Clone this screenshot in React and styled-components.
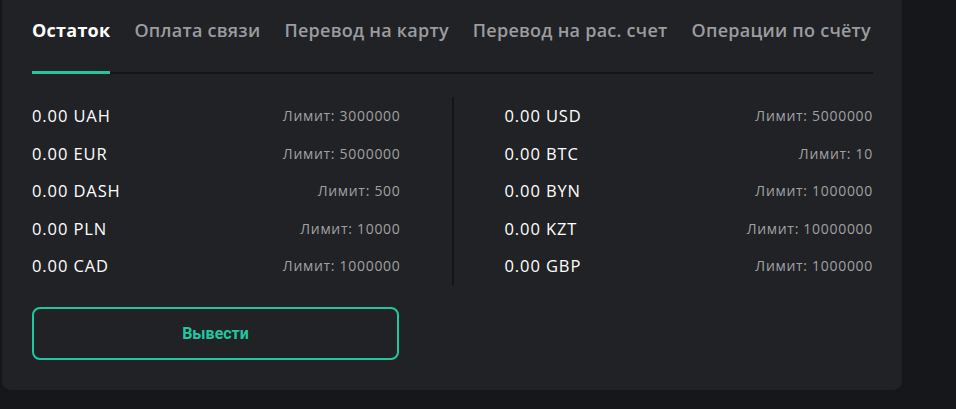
import React, { useState } from "react";
import styled, { createGlobalStyle } from "styled-components";

const GlobalStyle = createGlobalStyle`
  html, body {
    margin: 0;
    padding: 0;
    background: #16171a;
  }
  body {
    font-family: "Open Sans", "Noto Sans", sans-serif;
    color: #fff;
  }
`;

const Card = styled.div`
  width: 900px;
  margin-left: 2px;
  margin-top: -10px;
  padding: 10px 30px 30px 30px;
  box-sizing: border-box;
  background: #212225;
  border-radius: 0 0 9px 9px;
`;

const Tabs = styled.div`
  display: flex;
  gap: 24px;
  border-bottom: 2px solid #141518;
  height: 72px;
  margin-right: -1px;
`;

const Tab = styled.button`
  position: relative;
  display: flex;
  align-items: flex-start;
  background: none;
  border: none;
  padding: 18px 0 0;
  height: 72px;
  font-family: inherit;
  font-size: 18px;
  line-height: 24px;
  letter-spacing: 0.25px;
  font-weight: ${(p) => (p.$active ? 700 : 600)};
  color: ${(p) => (p.$active ? "#ffffff" : "#9b9ca0")};
  cursor: pointer;
  white-space: nowrap;

  &::after {
    content: "";
    display: ${(p) => (p.$active ? "block" : "none")};
    position: absolute;
    left: 0;
    right: 0;
    bottom: -2px;
    height: 3px;
    background: #1fc8a0;
  }
`;

const Balances = styled.div`
  display: flex;
  padding-top: 23px;
`;

const Column = styled.div`
  flex: 1;
  display: flex;
  flex-direction: column;
`;

const Divider = styled.div`
  width: 2px;
  background: #141518;
  margin: 0 51px 0 52px;
`;

const Row = styled.div`
  display: flex;
  justify-content: space-between;
  align-items: center;
  height: 37.5px;
`;

const Amount = styled.span`
  font-size: 16.5px;
  letter-spacing: 0.9px;
  color: #ffffff;
`;

const Limit = styled.span`
  font-size: 14px;
  letter-spacing: 0.7px;
  margin-right: -1px;
  color: #a0a1a4;
`;

const Withdraw = styled.button`
  margin-top: 22px;
  width: 367px;
  height: 53px;
  background: transparent;
  border: 2px solid #1fc8a0;
  border-radius: 8px;
  color: #1fc8a0;
  font-family: "Roboto", sans-serif;
  font-weight: 700;
  font-size: 16px;
  cursor: pointer;
`;

const tabs = [
  "Остаток",
  "Оплата связи",
  "Перевод на карту",
  "Перевод на рас. счет",
  "Операции по счёту",
];

const left = [
  ["UAH", "3000000"],
  ["EUR", "5000000"],
  ["DASH", "500"],
  ["PLN", "10000"],
  ["CAD", "1000000"],
];

const right = [
  ["USD", "5000000"],
  ["BTC", "10"],
  ["BYN", "1000000"],
  ["KZT", "10000000"],
  ["GBP", "1000000"],
];

const BalanceColumn = ({ items }) => (
  <Column>
    {items.map(([cur, limit]) => (
      <Row key={cur}>
        <Amount>0.00 {cur}</Amount>
        <Limit>Лимит: {limit}</Limit>
      </Row>
    ))}
  </Column>
);

const App = () => {
  const [active, setActive] = useState(0);
  return (
    <>
      <GlobalStyle />
      <Card>
        <Tabs>
          {tabs.map((t, i) => (
            <Tab key={t} $active={i === active} onClick={() => setActive(i)}>
              {t}
            </Tab>
          ))}
        </Tabs>
        <Balances>
          <BalanceColumn items={left} />
          <Divider />
          <BalanceColumn items={right} />
        </Balances>
        <Withdraw>Вывести</Withdraw>
      </Card>
    </>
  );
};

export default App;
